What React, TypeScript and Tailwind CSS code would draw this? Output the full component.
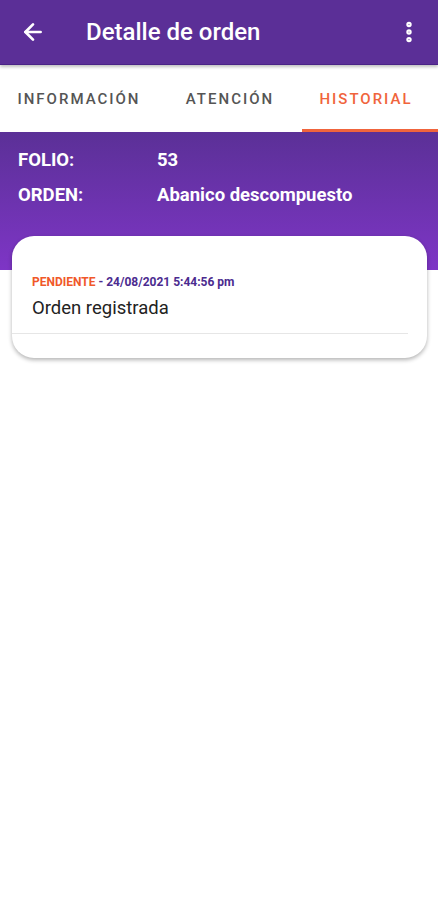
import { ArrowLeft, EllipsisVertical } from "lucide-react";

const tabs = [
  { label: "INFORMACIÓN", width: "w-[158px]", active: false },
  { label: "ATENCIÓN", width: "w-[144px]", active: false },
  { label: "HISTORIAL", width: "w-[136px]", active: true }
];

export default function App() {
  return (
    <div className="min-h-[900px] bg-white font-['Roboto',sans-serif]">
      <header className="relative z-10 flex h-[65px] items-center border-b border-[#4a2386] bg-[#5b2f97] shadow-[0_2px_3px_rgba(0,0,0,0.25)]">
        <ArrowLeft size={26} strokeWidth={2.5} className="ml-[20px] text-white" />
        <h1 className="ml-[40px] flex-1 text-[24px] font-medium text-white">Detalle de orden</h1>
        <EllipsisVertical size={26} strokeWidth={3} className="mr-[16px] text-white" />
      </header>

      <nav className="flex h-[67px] bg-white">
        {tabs.map((tab) => (
          <div
            key={tab.label}
            className={`${tab.width} flex items-center justify-center border-b-[3px] pt-[5px] text-[15px] font-medium tracking-[2px] ${
              tab.active ? "border-[#f0643c] pr-[8px] text-[#f0643c]" : "border-transparent text-[#555555]"
            }`}
          >
            {tab.label}
          </div>
        ))}
      </nav>

      <section className="h-[138px] bg-gradient-to-b from-[#5b3097] to-[#7e35c6] px-[18px] pt-[17px]">
        <div className="flex h-[24px] items-center text-[18.5px] font-bold text-white">
          <span className="w-[139px]">FOLIO:</span>
          <span>53</span>
        </div>
        <div className="mt-[11px] flex h-[24px] items-center text-[18.5px] font-bold text-white">
          <span className="w-[139px]">ORDEN:</span>
          <span>Abanico descompuesto</span>
        </div>
      </section>

      <div className="-mt-[34px] px-[12px] pr-[11px]">
        <article className="h-[122px] rounded-[22px] bg-white pt-[39px] shadow-[0_2px_4px_rgba(0,0,0,0.3)]">
          <p className="pl-[20px] text-[12px] font-bold leading-[14px]">
            <span className="text-[#f0582a]">PENDIENTE</span>
            <span className="text-[#4b2b8f]"> - 24/08/2021 5:44:56 pm</span>
          </p>
          <p className="mt-[7px] pl-[20px] text-[18.5px] leading-[24px] text-[#222222]">Orden registrada</p>
          <div className="mr-[19px] mt-[13px] h-px bg-[#e6e6e6]" />
        </article>
      </div>
    </div>
  );
}
